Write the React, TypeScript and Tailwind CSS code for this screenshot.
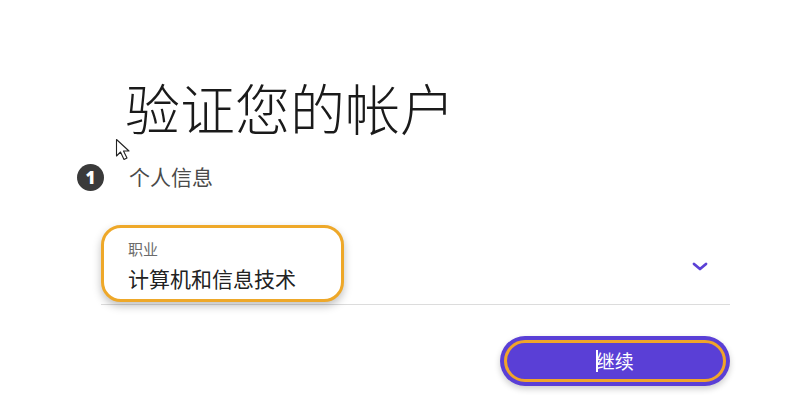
import React from "react";

export default function App() {
  return (
    <div
      className="relative w-[800px] h-[417px] bg-white overflow-hidden"
      style={{ fontFamily: '"Noto Sans CJK SC", "Noto Sans", sans-serif' }}
    >
      <div className="flex flex-col pl-[77px] pt-[70px] w-[730px]">
        <h1 className="pl-[48px] text-[55px] leading-[72px] font-light text-[#1a1a1a]">
          验证您的帐户
        </h1>
        <div className="flex items-center gap-[25px] mt-[22px]">
          <div className="w-[27px] h-[27px] rounded-full bg-[#3a3a3a] text-white flex items-center justify-center text-[17px] font-extrabold leading-none" style={{ fontFamily: '"Open Sans", sans-serif' }}>
            1
          </div>
          <span className="text-[21px] leading-[28px] text-[#4a4a4a] -mt-[4px]">个人信息</span>
        </div>
        <div className="relative mt-[34px] ml-[24px] h-[80px] border-b border-[#dcdcdc]">
          <div className="absolute left-0 top-0 w-[243px] h-[77px] rounded-[20px] border-[3px] border-[#eea829] bg-white shadow-[0_4px_8px_rgba(0,0,0,0.25)] flex flex-col pl-[24px] pt-[11px]">
            <span className="text-[15px] leading-[20px] text-[#6b6b6b]">职业</span>
            <span className="text-[21px] leading-[30px] text-[#222] mt-[4px]">计算机和信息技术</span>
          </div>
          <svg className="absolute right-[22px] top-[37px]" width="16" height="9" viewBox="0 0 16 9">
            <path d="M2 2 L8 7 L14 2" fill="none" stroke="#5b41d6" strokeWidth="2.8" strokeLinecap="round" strokeLinejoin="round" />
          </svg>
        </div>
        <div className="flex justify-end mt-[31px]">
          <button className="w-[230px] h-[50px] rounded-full bg-[#5a3fd6] p-[4px] shadow-[0_3px_6px_rgba(0,0,0,0.2)]">
            <div className="w-full h-full rounded-full border-[3px] border-[#f0a42a] flex items-center justify-center text-white text-[19px]">
              <span className="w-[1.5px] h-[22px] bg-white -mr-[2px] inline-block" />
              继续
            </div>
          </button>
        </div>
      </div>
      <svg className="absolute left-[115px] top-[138px]" width="20" height="26" viewBox="0 0 20 26">
        <path d="M1.5 1.5 L1.5 18 L5.5 14 L9 21.5 L12 20 L8.5 13 L14 13 Z" fill="white" stroke="#222" strokeWidth="1.1" strokeLinejoin="round" />
      </svg>
    </div>
  );
}
